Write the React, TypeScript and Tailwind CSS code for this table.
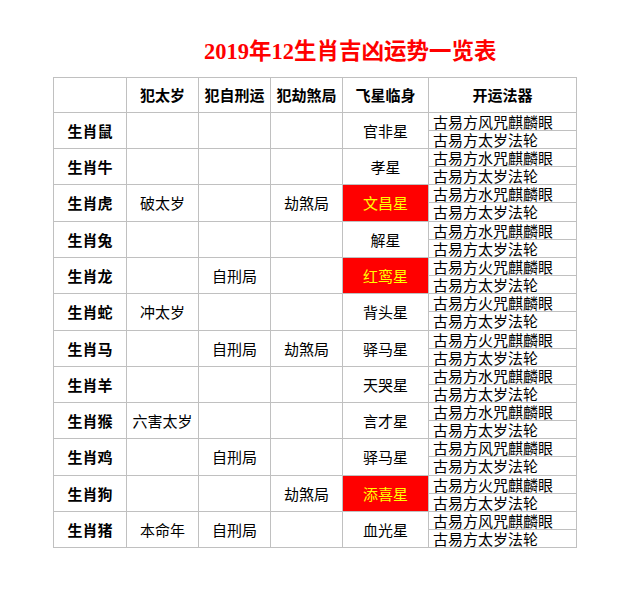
const rows = [
  { name: '生肖鼠', tai: '', xing: '', jie: '', star: '官非星', hot: false, item: '风', h: 'h-[36px]' },
  { name: '生肖牛', tai: '', xing: '', jie: '', star: '孝星', hot: false, item: '水', h: 'h-[36px]' },
  { name: '生肖虎', tai: '破太岁', xing: '', jie: '劫煞局', star: '文昌星', hot: true, item: '水', h: 'h-[37px]' },
  { name: '生肖兔', tai: '', xing: '', jie: '', star: '解星', hot: false, item: '水', h: 'h-[36px]' },
  { name: '生肖龙', tai: '', xing: '自刑局', jie: '', star: '红鸾星', hot: true, item: '火', h: 'h-[36px]' },
  { name: '生肖蛇', tai: '冲太岁', xing: '', jie: '', star: '背头星', hot: false, item: '火', h: 'h-[37px]' },
  { name: '生肖马', tai: '', xing: '自刑局', jie: '劫煞局', star: '驿马星', hot: false, item: '火', h: 'h-[36px]' },
  { name: '生肖羊', tai: '', xing: '', jie: '', star: '天哭星', hot: false, item: '水', h: 'h-[36px]' },
  { name: '生肖猴', tai: '六害太岁', xing: '', jie: '', star: '言才星', hot: false, item: '水', h: 'h-[36px]' },
  { name: '生肖鸡', tai: '', xing: '自刑局', jie: '', star: '驿马星', hot: false, item: '风', h: 'h-[37px]' },
  { name: '生肖狗', tai: '', xing: '', jie: '劫煞局', star: '添喜星', hot: true, item: '火', h: 'h-[36px]' },
  { name: '生肖猪', tai: '本命年', xing: '自刑局', jie: '', star: '血光星', hot: false, item: '风', h: 'h-[36px]' },
];

const cell = 'flex items-center justify-center border-r border-b border-[#c0c0c0]';

export default function App() {
  return (
    <div
      className="w-[642px] h-[590px] bg-white text-black text-[15px] leading-[18px]"
      style={{ fontFamily: '"Noto Sans CJK SC", sans-serif' }}
    >
      {/* Title */}
      <div className="pt-[36px] pl-[204px] h-[77px]">
        <h1 className="text-[22.5px] leading-[27px] font-bold text-[#ff0000] whitespace-nowrap">
          <span style={{ fontFamily: '"Liberation Serif", serif' }}>2019</span>年
          <span style={{ fontFamily: '"Liberation Serif", serif' }}>12</span>生肖吉凶运势一览表
        </h1>
      </div>

      {/* Table */}
      <div className="ml-[53px] w-[524px] border-l border-t border-[#c0c0c0]">
        <div className="flex h-[35px] font-bold">
          <div className={`${cell} w-[73px]`} />
          <div className={`${cell} w-[72px]`}>犯太岁</div>
          <div className={`${cell} w-[72px]`}>犯自刑运</div>
          <div className={`${cell} w-[72px]`}>犯劫煞局</div>
          <div className={`${cell} w-[86px]`}>飞星临身</div>
          <div className={`${cell} w-[148px]`}>开运法器</div>
        </div>
        {rows.map((r) => (
          <div key={r.name} className={`flex ${r.h}`}>
            <div className={`${cell} w-[73px] font-bold`}>{r.name}</div>
            <div className={`${cell} w-[72px]`}>{r.tai}</div>
            <div className={`${cell} w-[72px]`}>{r.xing}</div>
            <div className={`${cell} w-[72px]`}>{r.jie}</div>
            <div className={`${cell} w-[86px] ${r.hot ? 'bg-[#ff0000] text-[#ffff00]' : ''}`}>{r.star}</div>
            <div className="w-[148px] flex flex-col border-r border-b border-[#c0c0c0]">
              <div className="h-[18px] border-b border-[#c0c0c0] pl-[4px] flex items-center whitespace-nowrap">
                古易方{r.item}咒麒麟眼
              </div>
              <div className="flex-1 pl-[4px] flex items-center whitespace-nowrap">古易方太岁法轮</div>
            </div>
          </div>
        ))}
      </div>
    </div>
  );
}
